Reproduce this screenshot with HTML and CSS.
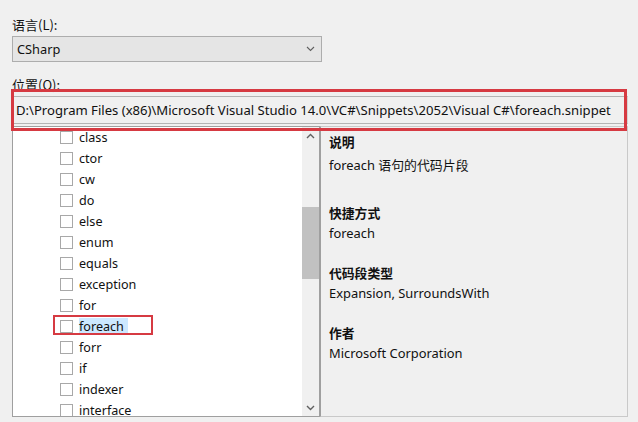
FILE: index.html
```html
<!DOCTYPE html>
<html lang="zh-CN">
<head>
<meta charset="utf-8">
<title>代码片段管理器</title>
<link rel="stylesheet" href="styles.css">
</head>
<body>
<div class="page">
  <div class="label lang-label">语言(L):</div>
  <div class="combo">
    <span class="combo-text">CSharp</span>
    <svg class="combo-arrow" width="9" height="6" viewBox="0 0 9 6"><path d="M1 1 L4.5 4.5 L8 1" fill="none" stroke="#606060" stroke-width="1.1"/></svg>
  </div>
  <div class="label loc-label">位置(O):</div>
  <div class="pathbox">D:\Program Files (x86)\Microsoft Visual Studio 14.0\VC#\Snippets\2052\Visual C#\foreach.snippet</div>
  <div class="main">
    <div class="list">
      <div class="rows">
        <div class="row"><span class="cb"></span><span class="name">class</span></div>
        <div class="row"><span class="cb"></span><span class="name">ctor</span></div>
        <div class="row"><span class="cb"></span><span class="name">cw</span></div>
        <div class="row"><span class="cb"></span><span class="name">do</span></div>
        <div class="row"><span class="cb"></span><span class="name">else</span></div>
        <div class="row"><span class="cb"></span><span class="name">enum</span></div>
        <div class="row"><span class="cb"></span><span class="name">equals</span></div>
        <div class="row"><span class="cb"></span><span class="name">exception</span></div>
        <div class="row"><span class="cb"></span><span class="name">for</span></div>
        <div class="row selected"><span class="cb"></span><span class="name">foreach</span><span class="mark-row"></span></div>
        <div class="row"><span class="cb"></span><span class="name">forr</span></div>
        <div class="row"><span class="cb"></span><span class="name">if</span></div>
        <div class="row"><span class="cb"></span><span class="name">indexer</span></div>
        <div class="row"><span class="cb"></span><span class="name">interface</span></div>
      </div>
      <div class="scrollbar">
        <div class="arrow"><svg width="9" height="6" viewBox="0 0 9 6"><path d="M1 5 L4.5 1.5 L8 5" fill="none" stroke="#606060" stroke-width="1.4"/></svg></div>
        <div class="thumb"></div>
        <div class="arrow down"><svg width="9" height="6" viewBox="0 0 9 6"><path d="M1 1 L4.5 4.5 L8 1" fill="none" stroke="#606060" stroke-width="1.4"/></svg></div>
      </div>
    </div>
    <div class="details">
      <div class="dh first">说明</div>
      <div class="dv desc">foreach 语句的代码片段</div>
      <div class="dh gap-big">快捷方式</div>
      <div class="dv">foreach</div>
      <div class="dh">代码段类型</div>
      <div class="dv">Expansion, SurroundsWith</div>
      <div class="dh">作者</div>
      <div class="dv">Microsoft Corporation</div>
    </div>
  </div>
  <div class="mark-path"></div>
</div>
</body>
</html>
```
FILE: styles.css
```css
html, body {
  margin: 0;
  padding: 0;
  background: #f0f0f0;
}
body {
  width: 638px;
  height: 422px;
  overflow: hidden;
  font-family: "Noto Sans", "Noto Sans CJK SC", sans-serif;
  font-size: 12px;
  color: #111;
}
.page {
  position: relative;
  padding: 0 10px 0 12px;
  height: 422px;
  box-sizing: border-box;
}
.label {
  font-family: "Noto Sans CJK SC", sans-serif;
  font-size: 13px;
  line-height: 18px;
  height: 18px;
}
.lang-label {
  padding-top: 16px;
}
.combo {
  margin-top: 2px;
  width: 310px;
  height: 26px;
  box-sizing: border-box;
  border: 1px solid #adadad;
  background: #e5e5e5;
  display: flex;
  align-items: center;
  justify-content: space-between;
  padding: 0 6px 0 4px;
  font-size: 12.8px;
}
.loc-label {
  margin-top: 14px;
}
.pathbox {
  margin-top: 2px;
  margin-left: 1px;
  height: 28px;
  box-sizing: border-box;
  border: 1px solid #b4b4b4;
  border-right-color: #d4d4d4;
  background: #f0f0f0;
  padding: 0 0 0 2px;
  line-height: 26px;
  font-size: 13.1px;
  white-space: nowrap;
  overflow: hidden;
}
.main {
  margin-top: 2px;
  display: flex;
  height: 291px;
}
.list {
  width: 308px;
  box-sizing: border-box;
  border: 1px solid #9f9f9f;
  background: #fff;
  display: flex;
  overflow: hidden;
}
.rows {
  flex: 1;
  padding-top: 0;
}
.row {
  position: relative;
  height: 21px;
  display: flex;
  align-items: center;
  padding-left: 47px;
  font-size: 12.6px;
}
.cb {
  width: 13px;
  height: 13px;
  box-sizing: border-box;
  border: 1px solid #a8a8a8;
  background: #fff;
  margin-right: 6px;
  flex: none;
}
.name {
  line-height: 17px;
  padding: 0 1px 0 0;
}
.selected .name {
  background: #cce8ff;
  padding-right: 4px;
}
.mark-row {
  position: absolute;
  left: 40px;
  top: -1px;
  width: 100px;
  height: 20px;
  box-sizing: border-box;
  border: 2px solid #d63a42;
}
.scrollbar {
  width: 17px;
  background: #f0f0f0;
  display: flex;
  flex-direction: column;
  align-items: center;
}
.arrow {
  height: 17px;
  width: 17px;
  display: flex;
  align-items: center;
  justify-content: center;
}
.arrow.down {
  margin-top: auto;
}
.thumb {
  margin-top: 63px;
  width: 17px;
  height: 72px;
  background: #c1c1c1;
}
.details {
  width: 308px;
  box-sizing: border-box;
  border: 1px solid #c9c9c9;
  border-left-color: #9f9f9f;
  margin-left: 0;
  padding: 4px 0 0 8px;
  font-size: 12.9px;
}
.dh {
  font-family: "Noto Sans CJK SC", sans-serif;
  font-weight: bold;
  font-size: 12.8px;
  line-height: 21px;
  margin-top: 18px;
}
.dh.first {
  margin-top: 0;
}
.dh.gap-big {
  margin-top: 26px;
}
.dv {
  line-height: 21px;
}
.dv.desc {
  margin-top: 3px;
}
.mark-path {
  position: absolute;
  left: 11px;
  top: 89px;
  width: 616px;
  height: 42px;
  box-sizing: border-box;
  border: 3px solid #d63a42;
}
```
